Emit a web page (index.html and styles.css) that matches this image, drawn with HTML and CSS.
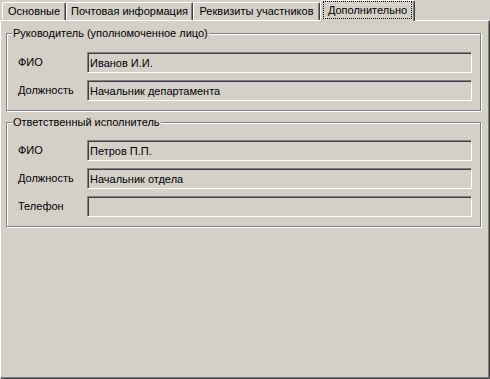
FILE: index.html
```html
<!DOCTYPE html>
<html lang="ru">
<head>
<meta charset="utf-8">
<link rel="stylesheet" href="styles.css">
</head>
<body>
<div class="tabs">
  <div class="tab t1">Основные</div>
  <div class="tab t2">Почтовая информация</div>
  <div class="tab t3">Реквизиты участников</div>
  <div class="tab active"><span class="focus">Дополнительно</span></div>
</div>
<div class="panel">
  <fieldset class="group g1">
    <legend>Руководитель (уполномоченное лицо)</legend>
    <div class="row"><span class="label">ФИО</span><div class="field">Иванов И.И.</div></div>
    <div class="row"><span class="label">Должность</span><div class="field">Начальник департамента</div></div>
  </fieldset>
  <fieldset class="group g2">
    <legend>Ответственный исполнитель</legend>
    <div class="row"><span class="label">ФИО</span><div class="field">Петров П.П.</div></div>
    <div class="row"><span class="label">Должность</span><div class="field">Начальник отдела</div></div>
    <div class="row"><span class="label">Телефон</span><div class="field"></div></div>
  </fieldset>
</div>
</body>
</html>
```
FILE: styles.css
```css
html, body {
  margin: 0;
  padding: 0;
}
body {
  width: 490px;
  height: 379px;
  overflow: hidden;
  background: #d4d0c8;
  color: #000;
  font-family: "Liberation Sans", Arial, sans-serif;
  font-size: 11px;
  line-height: 13px;
}
.tabs {
  display: flex;
  align-items: flex-end;
  height: 20px;
  padding-left: 2px;
  position: relative;
  z-index: 1;
}
.tab {
  box-sizing: border-box;
  height: 18px;
  border-top: 1px solid #fff;
  border-left: 1px solid #fff;
  border-right: 1px solid #404040;
  border-top-left-radius: 2px;
  border-top-right-radius: 2px;
  box-shadow: inset -1px 0 #808080;
  display: flex;
  align-items: center;
  justify-content: center;
  padding-bottom: 1px;
  white-space: nowrap;
}
.t1 { width: 64px; }
.t2 { width: 127px; }
.t3 { width: 127px; }
.active {
  width: 95px;
  height: 21px;
  margin-bottom: -1px;
  background: #d4d0c8;
  padding-bottom: 2px;
}
.focus {
  outline: 1px dotted #000;
  outline-offset: 0;
  padding: 2px 4px 1px 4px;
}
.panel {
  box-sizing: border-box;
  height: 359px;
  border: 1px solid;
  border-color: #fff #404040 #404040 #fff;
  box-shadow: inset -1px -1px #808080;
  padding: 6px 0 0 5px;
}
.group {
  box-sizing: border-box;
  width: 475px;
  margin: 0;
  border: 1px solid #808080;
  box-shadow: inset 1px 1px #fff, 1px 1px #fff;
  padding: 12px 8px 9px 11px;
  min-width: 0;
}
.g2 {
  margin-top: 5px;
  padding-top: 11px;
}
.group legend {
  margin-left: -6px;
  padding: 0 1px;
  line-height: 13px;
  background: #d4d0c8;
}
.row {
  display: flex;
  align-items: center;
  height: 21px;
}
.row + .row {
  margin-top: 7px;
}
.label {
  width: 69px;
  flex: none;
}
.field {
  box-sizing: border-box;
  width: 386px;
  height: 21px;
  border: 1px solid;
  border-color: #808080 #fff #fff #808080;
  box-shadow: inset 1px 1px #404040, inset -1px -1px #d4d0c8;
  padding: 3px 3px 0 2px;
  line-height: 14px;
  white-space: nowrap;
  overflow: hidden;
}
```
